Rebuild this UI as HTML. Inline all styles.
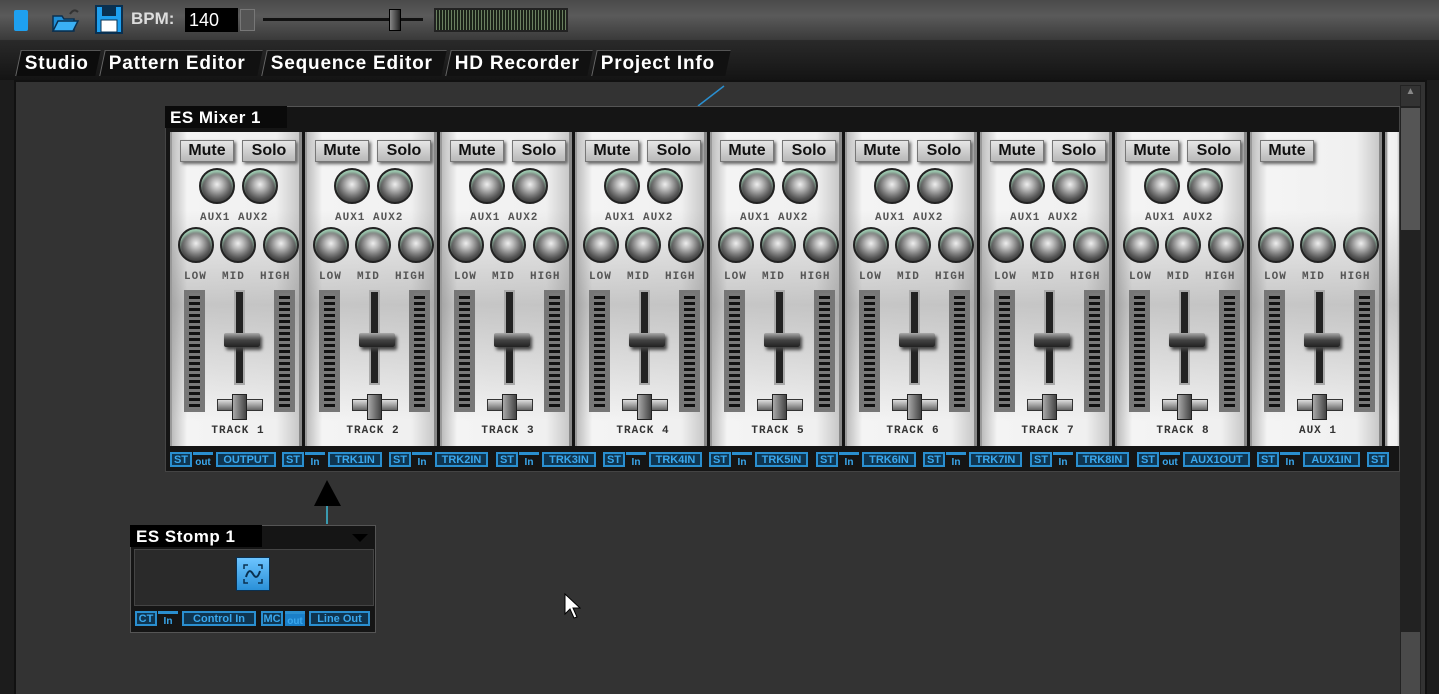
<!DOCTYPE html>
<html><head><meta charset="utf-8"><style>
*{margin:0;padding:0;box-sizing:border-box}
body{width:1439px;height:694px;overflow:hidden;background:#1c1c1c;font-family:"Liberation Sans",sans-serif;position:relative}
.a{position:absolute}
#top{left:0;top:0;width:1439px;height:40px;background:linear-gradient(#4a4a4a,#5a5a5a 40%,#3a3a3a)}
#tabs{left:0;top:40px;width:1439px;height:40px;background:linear-gradient(#2a2a2a,#141414)}
.tab{position:absolute;top:50px;height:26px;background:#0c0c0c;color:#fff;font-size:19px;letter-spacing:.8px;font-weight:bold;line-height:26px;padding-left:6px;border-top:1px solid #555;border-left:1px solid #666;transform:skewX(-12deg)}
.tab span{display:inline-block;transform:skewX(12deg)}
#work{left:14px;top:80px;width:1413px;height:614px;background:#333;border:2px solid #111;border-bottom:none}
.strip{position:absolute;top:132px;width:132px;height:314px;background:linear-gradient(90deg,#bdbdbd,#f4f4f4 12%,#f0f0f0 82%,#c8c8c8);border-right:3px solid #888;border-left:2px solid #999;overflow:hidden}
.strip::after{content:"";position:absolute;left:0;top:0;right:0;bottom:0;background:linear-gradient(rgba(255,255,255,0) 25%,rgba(130,130,130,.4) 55%,rgba(255,255,255,0) 92%)}
.btn{position:absolute;top:8px;width:54px;height:22px;background:linear-gradient(#e6e6e6,#b8b8b8);border:1px solid #777;box-shadow:2px 2px 3px #666;font-size:16px;font-weight:bold;color:#111;text-align:center;line-height:20px;z-index:2}
.k{position:absolute;width:36px;height:36px;border-radius:50%;background:radial-gradient(circle at 50% 45%,#eee 0,#bbb 22%,#777 48%,#555 62%,#333 80%);border:2px solid #222;box-shadow:0 3px 2px #9dc9b0 inset;z-index:2}
.lb{position:absolute;font-family:"Liberation Mono",monospace;font-size:11px;font-weight:bold;color:#555;letter-spacing:1px;z-index:2}
.m{position:absolute;top:158px;width:21px;height:122px;background:repeating-linear-gradient(#7a7a7a 0 3px,#111 3px 6px);border:3px solid #777;border-left-width:5px;border-right-width:5px;z-index:2}
.tr{position:absolute;left:62px;top:158px;width:11px;height:95px;background:#222;border:2px solid #aaa;z-index:2}
.cap{position:absolute;left:52px;top:201px;width:36px;height:14px;background:linear-gradient(#aaa,#444 50%,#222);border-radius:2px;box-shadow:2px 3px 3px #444;z-index:3}
.ch{position:absolute;left:45px;top:267px;width:46px;height:12px;background:linear-gradient(#ddd,#666);border:1px solid #333;z-index:2}
.cv{position:absolute;left:60px;top:262px;width:15px;height:26px;background:linear-gradient(90deg,#aaa,#444);border:1px solid #222;z-index:3}
.tn{position:absolute;top:293px;width:132px;text-align:center;font-family:"Liberation Mono",monospace;font-size:11px;font-weight:bold;color:#333;letter-spacing:1px;z-index:2}
.pb{position:absolute;top:452px;height:15px;background:#0f3550;border:2px solid #2a8fd0;color:#3aa8ee;font-size:11px;font-weight:bold;line-height:12px;text-align:center;overflow:hidden}
.io{position:absolute;top:452px;width:20px;height:15px;color:#3aa8ee;font-size:10px;font-weight:bold;text-align:center;line-height:16px;border-top:3px solid #2a8fd0}
</style></head><body>
<div id="top" class="a"></div>
<div class="a" style="left:14px;top:10px;width:14px;height:21px;background:#1ea0f0;border-radius:2px"></div>
<svg class="a" style="left:50px;top:6px" width="32" height="28"><path d="M3 10h9l2 3h10v12H3z" fill="#1e8fd8" stroke="#0a3050" stroke-width="1.5"/><path d="M3 25l5-10h20l-5 10z" fill="#3ab0f5" stroke="#0a3050" stroke-width="1.5"/><path d="M20 8q4-6 8-2" stroke="#333" fill="none" stroke-width="2"/></svg>
<svg class="a" style="left:94px;top:4px" width="30" height="30"><rect x="2" y="2" width="26" height="27" fill="#1ea0f0" stroke="#0a3050" stroke-width="2"/><rect x="8" y="3" width="14" height="9" fill="#0a3050"/><rect x="7" y="16" width="16" height="12" fill="#fff" stroke="#0a3050"/></svg>
<div class="a" style="left:131px;top:9px;color:#ddd;font-size:17px;font-weight:bold">BPM:</div>
<div class="a" style="left:185px;top:8px;width:53px;height:24px;background:#000;color:#fff;font-size:18px;line-height:24px;padding-left:4px">140</div>
<div class="a" style="left:240px;top:9px;width:15px;height:22px;background:#555;border:1px solid #777"></div>
<div class="a" style="left:263px;top:18px;width:160px;height:3px;background:#111"></div>
<div class="a" style="left:389px;top:9px;width:12px;height:22px;background:linear-gradient(90deg,#888,#222);border:1px solid #000"></div>
<div class="a" style="left:434px;top:8px;width:134px;height:24px;background:repeating-linear-gradient(90deg,#6a8060 0 1px,#1a2218 1px 3px);border:2px solid #222"></div>
<div id="tabs" class="a"></div>
<div class="tab" style="left:18px;width:80px"><span>Studio</span></div>
<div class="tab" style="left:102px;width:158px;background:#111"><span>Pattern Editor</span></div>
<div class="tab" style="left:264px;width:180px;background:#111"><span>Sequence Editor</span></div>
<div class="tab" style="left:448px;width:142px;background:#111"><span>HD Recorder</span></div>
<div class="tab" style="left:594px;width:134px;background:#111"><span>Project Info</span></div>
<div id="work" class="a"></div>
<div class="a" style="left:1400px;top:85px;width:21px;height:609px;background:#222"></div>
<div class="a" style="left:1401px;top:86px;width:19px;height:20px;background:#333;color:#888;font-size:10px;text-align:center">▲</div>
<div class="a" style="left:1401px;top:108px;width:19px;height:122px;background:#555"></div>
<div class="a" style="left:1401px;top:632px;width:19px;height:62px;background:#4a4a4a"></div>
<svg class="a" style="left:690px;top:84px" width="40" height="24"><path d="M8 22L34 2" stroke="#2a8fd0" stroke-width="1.5"/></svg>
<!-- mixer -->
<div class="a" style="left:165px;top:106px;width:1235px;height:366px;background:#151515;border:1px solid #444"></div>
<div class="a" style="left:165px;top:106px;width:122px;height:22px;background:#0a0a0a;color:#fff;font-size:17px;letter-spacing:.5px;font-weight:bold;padding-left:5px;line-height:24px">ES Mixer 1</div>
<div class="a" style="left:287px;top:106px;width:1113px;height:1px;background:#555"></div>
<div class="strip" style="left:170px"><div class="btn" style="left:8px">Mute</div><div class="btn" style="left:70px">Solo</div><div class="k" style="left:27px;top:36px"></div><div class="k" style="left:70px;top:36px"></div><div class="lb" style="left:28px;top:80px">AUX1 AUX2</div><div class="k" style="left:6px;top:95px"></div><div class="k" style="left:48px;top:95px"></div><div class="k" style="left:91px;top:95px"></div><div class="lb" style="left:12px;top:139px">LOW&nbsp; MID&nbsp; HIGH</div><div class="m" style="left:12px"></div><div class="m" style="left:102px"></div><div class="tr"></div><div class="cap"></div><div class="ch"></div><div class="cv"></div><div class="tn">TRACK 1</div></div>
<div class="strip" style="left:305px"><div class="btn" style="left:8px">Mute</div><div class="btn" style="left:70px">Solo</div><div class="k" style="left:27px;top:36px"></div><div class="k" style="left:70px;top:36px"></div><div class="lb" style="left:28px;top:80px">AUX1 AUX2</div><div class="k" style="left:6px;top:95px"></div><div class="k" style="left:48px;top:95px"></div><div class="k" style="left:91px;top:95px"></div><div class="lb" style="left:12px;top:139px">LOW&nbsp; MID&nbsp; HIGH</div><div class="m" style="left:12px"></div><div class="m" style="left:102px"></div><div class="tr"></div><div class="cap"></div><div class="ch"></div><div class="cv"></div><div class="tn">TRACK 2</div></div>
<div class="strip" style="left:440px"><div class="btn" style="left:8px">Mute</div><div class="btn" style="left:70px">Solo</div><div class="k" style="left:27px;top:36px"></div><div class="k" style="left:70px;top:36px"></div><div class="lb" style="left:28px;top:80px">AUX1 AUX2</div><div class="k" style="left:6px;top:95px"></div><div class="k" style="left:48px;top:95px"></div><div class="k" style="left:91px;top:95px"></div><div class="lb" style="left:12px;top:139px">LOW&nbsp; MID&nbsp; HIGH</div><div class="m" style="left:12px"></div><div class="m" style="left:102px"></div><div class="tr"></div><div class="cap"></div><div class="ch"></div><div class="cv"></div><div class="tn">TRACK 3</div></div>
<div class="strip" style="left:575px"><div class="btn" style="left:8px">Mute</div><div class="btn" style="left:70px">Solo</div><div class="k" style="left:27px;top:36px"></div><div class="k" style="left:70px;top:36px"></div><div class="lb" style="left:28px;top:80px">AUX1 AUX2</div><div class="k" style="left:6px;top:95px"></div><div class="k" style="left:48px;top:95px"></div><div class="k" style="left:91px;top:95px"></div><div class="lb" style="left:12px;top:139px">LOW&nbsp; MID&nbsp; HIGH</div><div class="m" style="left:12px"></div><div class="m" style="left:102px"></div><div class="tr"></div><div class="cap"></div><div class="ch"></div><div class="cv"></div><div class="tn">TRACK 4</div></div>
<div class="strip" style="left:710px"><div class="btn" style="left:8px">Mute</div><div class="btn" style="left:70px">Solo</div><div class="k" style="left:27px;top:36px"></div><div class="k" style="left:70px;top:36px"></div><div class="lb" style="left:28px;top:80px">AUX1 AUX2</div><div class="k" style="left:6px;top:95px"></div><div class="k" style="left:48px;top:95px"></div><div class="k" style="left:91px;top:95px"></div><div class="lb" style="left:12px;top:139px">LOW&nbsp; MID&nbsp; HIGH</div><div class="m" style="left:12px"></div><div class="m" style="left:102px"></div><div class="tr"></div><div class="cap"></div><div class="ch"></div><div class="cv"></div><div class="tn">TRACK 5</div></div>
<div class="strip" style="left:845px"><div class="btn" style="left:8px">Mute</div><div class="btn" style="left:70px">Solo</div><div class="k" style="left:27px;top:36px"></div><div class="k" style="left:70px;top:36px"></div><div class="lb" style="left:28px;top:80px">AUX1 AUX2</div><div class="k" style="left:6px;top:95px"></div><div class="k" style="left:48px;top:95px"></div><div class="k" style="left:91px;top:95px"></div><div class="lb" style="left:12px;top:139px">LOW&nbsp; MID&nbsp; HIGH</div><div class="m" style="left:12px"></div><div class="m" style="left:102px"></div><div class="tr"></div><div class="cap"></div><div class="ch"></div><div class="cv"></div><div class="tn">TRACK 6</div></div>
<div class="strip" style="left:980px"><div class="btn" style="left:8px">Mute</div><div class="btn" style="left:70px">Solo</div><div class="k" style="left:27px;top:36px"></div><div class="k" style="left:70px;top:36px"></div><div class="lb" style="left:28px;top:80px">AUX1 AUX2</div><div class="k" style="left:6px;top:95px"></div><div class="k" style="left:48px;top:95px"></div><div class="k" style="left:91px;top:95px"></div><div class="lb" style="left:12px;top:139px">LOW&nbsp; MID&nbsp; HIGH</div><div class="m" style="left:12px"></div><div class="m" style="left:102px"></div><div class="tr"></div><div class="cap"></div><div class="ch"></div><div class="cv"></div><div class="tn">TRACK 7</div></div>
<div class="strip" style="left:1115px"><div class="btn" style="left:8px">Mute</div><div class="btn" style="left:70px">Solo</div><div class="k" style="left:27px;top:36px"></div><div class="k" style="left:70px;top:36px"></div><div class="lb" style="left:28px;top:80px">AUX1 AUX2</div><div class="k" style="left:6px;top:95px"></div><div class="k" style="left:48px;top:95px"></div><div class="k" style="left:91px;top:95px"></div><div class="lb" style="left:12px;top:139px">LOW&nbsp; MID&nbsp; HIGH</div><div class="m" style="left:12px"></div><div class="m" style="left:102px"></div><div class="tr"></div><div class="cap"></div><div class="ch"></div><div class="cv"></div><div class="tn">TRACK 8</div></div>
<div class="strip" style="left:1250px"><div class="btn" style="left:8px">Mute</div><div class="k" style="left:6px;top:95px"></div><div class="k" style="left:48px;top:95px"></div><div class="k" style="left:91px;top:95px"></div><div class="lb" style="left:12px;top:139px">LOW&nbsp; MID&nbsp; HIGH</div><div class="m" style="left:12px"></div><div class="m" style="left:102px"></div><div class="tr"></div><div class="cap"></div><div class="ch"></div><div class="cv"></div><div class="tn">AUX 1</div></div>
<div class="strip" style="left:1385px;width:14px;border-right:none"></div>
<!-- ports -->
<div class="pb" style="left:170px;width:22px">ST</div><div class="io" style="left:193px">out</div><div class="pb" style="left:216px;width:60px">OUTPUT</div>
<div class="pb" style="left:282px;width:22px">ST</div><div class="io" style="left:305px">In</div><div class="pb" style="left:328px;width:54px">TRK1IN</div>
<div class="pb" style="left:389px;width:22px">ST</div><div class="io" style="left:412px">In</div><div class="pb" style="left:435px;width:53px">TRK2IN</div>
<div class="pb" style="left:496px;width:22px">ST</div><div class="io" style="left:519px">In</div><div class="pb" style="left:542px;width:54px">TRK3IN</div>
<div class="pb" style="left:603px;width:22px">ST</div><div class="io" style="left:626px">In</div><div class="pb" style="left:649px;width:53px">TRK4IN</div>
<div class="pb" style="left:709px;width:22px">ST</div><div class="io" style="left:732px">In</div><div class="pb" style="left:755px;width:53px">TRK5IN</div>
<div class="pb" style="left:816px;width:22px">ST</div><div class="io" style="left:839px">In</div><div class="pb" style="left:862px;width:54px">TRK6IN</div>
<div class="pb" style="left:923px;width:22px">ST</div><div class="io" style="left:946px">In</div><div class="pb" style="left:969px;width:53px">TRK7IN</div>
<div class="pb" style="left:1030px;width:22px">ST</div><div class="io" style="left:1053px">In</div><div class="pb" style="left:1076px;width:53px">TRK8IN</div>
<div class="pb" style="left:1137px;width:22px">ST</div><div class="io" style="left:1160px">out</div><div class="pb" style="left:1183px;width:67px">AUX1OUT</div>
<div class="pb" style="left:1257px;width:22px">ST</div><div class="io" style="left:1280px">In</div><div class="pb" style="left:1303px;width:57px">AUX1IN</div>
<div class="pb" style="left:1367px;width:22px">ST</div>
<!-- connection -->
<div class="a" style="left:326px;top:500px;width:2px;height:24px;background:#3a9ab0"></div>
<svg class="a" style="left:312px;top:478px" width="32" height="30"><path d="M15 2L29 28H2z" fill="#000"/></svg>
<!-- stomp -->
<div class="a" style="left:130px;top:525px;width:246px;height:108px;background:#151515;border:1px solid #555"></div>
<div class="a" style="left:130px;top:525px;width:132px;height:22px;background:#000;color:#fff;font-size:17px;letter-spacing:.5px;font-weight:bold;padding-left:6px;line-height:24px">ES Stomp 1</div>
<svg class="a" style="left:350px;top:532px" width="20" height="12"><path d="M2 2h16L10 10z" fill="#000"/></svg>
<div class="a" style="left:134px;top:549px;width:240px;height:57px;background:#2a2a2a;border:1px solid #444"></div>
<div class="a" style="left:236px;top:557px;width:34px;height:34px;background:linear-gradient(#6cc4ff,#2a90d8);border:1px solid #0a3050"></div>
<svg class="a" style="left:236px;top:557px" width="34" height="34"><path d="M10 20q3-10 7-3t7-3" stroke="#0a3050" stroke-width="2" fill="none"/><path d="M8 12V8h4M22 8h4v4M26 22v4h-4M12 26H8v-4" stroke="#0a3050" stroke-width="1.5" fill="none"/></svg>
<div class="pb" style="left:135px;top:611px;width:22px">CT</div><div class="io" style="left:158px;top:611px">In</div><div class="pb" style="left:182px;top:611px;width:74px">Control In</div>
<div class="pb" style="left:261px;top:611px;width:22px">MC</div><div class="io" style="left:285px;top:611px;background:#1a7fc8;color:#3aa8ee">out</div><div class="pb" style="left:309px;top:611px;width:61px">Line Out</div>
<svg class="a" style="left:563px;top:592px" width="18" height="30"><path d="M2 2v20l5-5 4 9 3-1-4-9h7z" fill="#fff" stroke="#000"/></svg>
</body></html>
